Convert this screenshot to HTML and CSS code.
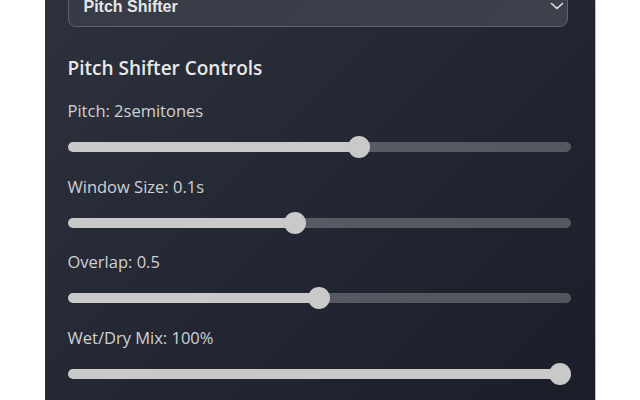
FILE: index.html
```html
<!DOCTYPE html>
<html lang="en">
<head>
<meta charset="utf-8">
<title>Pitch Shifter</title>
<link rel="stylesheet" href="styles.css">
</head>
<body>
<div class="panel">
  <div class="select-wrap">
    <select class="effect-select">
      <option>Pitch Shifter</option>
    </select>
    <svg class="chevron" width="14" height="8" viewBox="0 0 14 8" aria-hidden="true">
      <path d="M1.5 1.5 L7 6.5 L12.5 1.5" fill="none" stroke="#e4e4e4" stroke-width="1.6" stroke-linecap="round" stroke-linejoin="round"/>
    </svg>
  </div>
  <h2 class="heading">Pitch Shifter Controls</h2>
  <div class="controls">
    <div class="control">
      <label class="label">Pitch: 2semitones</label>
      <input class="slider" type="range" min="-12" max="12" value="2" style="--p:0.5833">
    </div>
    <div class="control">
      <label class="label">Window Size: 0.1s</label>
      <input class="slider" type="range" min="0.01" max="0.21" step="0.01" value="0.1" style="--p:0.446">
    </div>
    <div class="control">
      <label class="label">Overlap: 0.5</label>
      <input class="slider" type="range" min="0" max="1" step="0.01" value="0.5" style="--p:0.5">
    </div>
    <div class="control">
      <label class="label">Wet/Dry Mix: 100%</label>
      <input class="slider" type="range" min="0" max="100" value="100" style="--p:1">
    </div>
  </div>
</div>
</body>
</html>
```
FILE: styles.css
```css
html, body {
  margin: 0;
  padding: 0;
  background: #ffffff;
}

body {
  font-family: "Open Sans", Lato, sans-serif;
  overflow: hidden;
}

.panel {
  box-sizing: border-box;
  width: 551px;
  margin: -14px auto 0;
  padding: 0 24px 24px 22px;
  background: linear-gradient(135deg, #2d323d 0%, #222733 50%, #1a1e28 100%);
  border-left: 1px solid #2f3440;
  border-right: 1px solid #b9bcc2;
  min-height: 430px;
}

.select-wrap {
  position: relative;
  margin-right: 3px;
}

.effect-select {
  -webkit-appearance: none;
  appearance: none;
  display: block;
  width: 100%;
  height: 41px;
  margin: 0;
  padding: 0 30px 0 15px;
  border: 1px solid #5d626c;
  border-radius: 8px;
  background: linear-gradient(135deg, #363b46, #3c414b);
  color: #e6e6e6;
  font-family: "Liberation Sans", Arial, sans-serif;
  font-size: 16px;
  font-weight: 700;
  outline: none;
}

.chevron {
  position: absolute;
  right: 4px;
  top: 16px;
}

.heading {
  margin: 30px 0 23px;
  font-size: 19px;
  line-height: 22px;
  font-weight: 600;
  color: #e8e8e9;
}

.controls {
  display: flex;
  flex-direction: column;
  gap: 19.5px;
}

.control {
  display: flex;
  flex-direction: column;
  gap: 16px;
}

.label {
  font-size: 16.5px;
  line-height: 18px;
  color: #d0d1d3;
}

.slider {
  -webkit-appearance: none;
  appearance: none;
  display: block;
  width: 100%;
  height: 22px;
  margin: 0;
  padding: 0;
  background: transparent;
  outline: none;
}

.slider::-webkit-slider-runnable-track {
  height: 10px;
  border-radius: 5px;
  background: linear-gradient(to right,
    #c9c9c9 0,
    #c9c9c9 calc(11px + var(--p) * (100% - 22px)),
    rgba(255, 255, 255, 0.24) calc(11px + var(--p) * (100% - 22px)));
}

.slider::-webkit-slider-thumb {
  -webkit-appearance: none;
  appearance: none;
  width: 22px;
  height: 22px;
  margin-top: -6px;
  border: none;
  border-radius: 50%;
  background: #c9c9c9;
}
```
